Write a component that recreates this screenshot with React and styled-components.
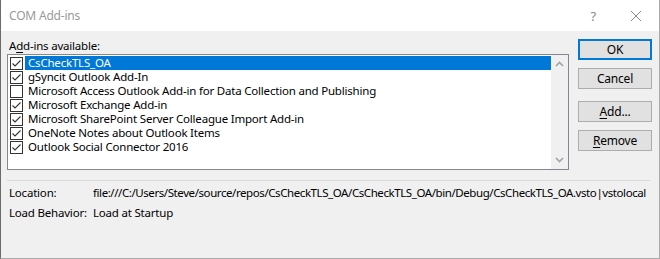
import styled, { createGlobalStyle } from 'styled-components'

const GlobalStyle = createGlobalStyle`
  html, body {
    margin: 0;
    padding: 0;
    background: #f0f0f0;
  }
  body {
    font-family: "Noto Sans", "Open Sans", sans-serif;
    font-size: 11.5px;
    letter-spacing: -0.2px;
    color: #000;
  }
`

const addIns = [
  { name: 'CsCheckTLS_OA', checked: true, selected: true },
  { name: 'gSyncit Outlook Add-In', checked: true },
  { name: 'Microsoft Access Outlook Add-in for Data Collection and Publishing', checked: false },
  { name: 'Microsoft Exchange Add-in', checked: true },
  { name: 'Microsoft SharePoint Server Colleague Import Add-in', checked: true },
  { name: 'OneNote Notes about Outlook Items', checked: true },
  { name: 'Outlook Social Connector 2016', checked: true },
]

const CheckBox = ({ checked }) => (
  <Box>
    {checked && (
      <svg width="11" height="11" viewBox="0 0 11 11">
        <path d="M1.5 5.5 L4 8 L9.5 2.5" fill="none" stroke="#333" strokeWidth="1.1" />
      </svg>
    )}
  </Box>
)

const Chevron = ({ down }) => (
  <svg width="9" height="6" viewBox="0 0 9 6">
    <path
      d={down ? 'M1 1 L4.5 4.5 L8 1' : 'M1 5 L4.5 1.5 L8 5'}
      fill="none"
      stroke="#a3a3a3"
      strokeWidth="1.6"
    />
  </svg>
)

const App = () => {
  return (
    <>
      <GlobalStyle />
      <Window>
        <TitleBar>
          <Title>COM Add-ins</Title>
          <TitleButtons>
            <HelpGlyph>?</HelpGlyph>
            <svg width="12" height="12" viewBox="0 0 12 12">
              <path d="M1 1 L11 11 M11 1 L1 11" stroke="#8a8a8a" strokeWidth="1" />
            </svg>
          </TitleButtons>
        </TitleBar>

        <Body>
          <Main>
            <ListColumn>
              <Label>A<u>d</u>d-ins available:</Label>
              <ListBox>
                <Items>
                  {addIns.map((item) => (
                    <Row key={item.name}>
                      <CheckBox checked={item.checked} />
                      <ItemText $selected={item.selected}>{item.name}</ItemText>
                    </Row>
                  ))}
                </Items>
                <ScrollBar>
                  <Chevron />
                  <Chevron down />
                </ScrollBar>
              </ListBox>
            </ListColumn>

            <Buttons>
              <Button $default>OK</Button>
              <Button>Cancel</Button>
              <Spacer />
              <Button><u>A</u>dd...</Button>
              <Button><u>R</u>emove</Button>
            </Buttons>
          </Main>

          <Separator />

          <Details>
            <DetailLabel>Location:</DetailLabel>
            <DetailValue $tight>file:///C:/Users/Steve/source/repos/CsCheckTLS_OA/CsCheckTLS_OA/bin/Debug/CsCheckTLS_OA.vsto|vstolocal</DetailValue>
            <DetailLabel>Load Behavior:</DetailLabel>
            <DetailValue>Load at Startup</DetailValue>
          </Details>
        </Body>
      </Window>
    </>
  )
}

const Window = styled.div`
  width: 660px;
  height: 259px;
  box-sizing: border-box;
  border-left: 1px solid #6b6b6b;
  border-right: 1px solid #aaaaaa;
  border-bottom: 1px solid #aaaaaa;
  background: #f0f0f0;
  display: flex;
  flex-direction: column;
  overflow: hidden;
`

const TitleBar = styled.div`
  height: 31px;
  flex: none;
  background: #fff;
  display: flex;
  align-items: center;
  justify-content: space-between;
  padding: 0 17px 0 8px;
`

const Title = styled.div`
  color: #9a9a9a;
  font-size: 12px;
  margin-top: -1px;
`

const TitleButtons = styled.div`
  display: flex;
  align-items: center;
  gap: 34px;
`

const HelpGlyph = styled.span`
  color: #8a8a8a;
  font-size: 13px;
`

const Body = styled.div`
  flex: 1;
  display: flex;
  flex-direction: column;
  padding: 7px 7px 0 6px;
`

const Main = styled.div`
  display: flex;
  gap: 9px;
`

const ListColumn = styled.div`
  display: flex;
  flex-direction: column;
  width: 562px;
`

const Label = styled.div`
  height: 16px;
  line-height: 15px;
  padding-left: 2px;

  u {
    text-decoration-thickness: 1px;
    text-underline-offset: 2px;
  }
`

const ListBox = styled.div`
  height: 116px;
  box-sizing: border-box;
  border: 1px solid #828790;
  background: #fff;
  display: flex;
`

const Items = styled.div`
  flex: 1;
  padding-top: 1px;
  display: flex;
  flex-direction: column;
`

const Row = styled.div`
  height: 14px;
  display: flex;
  align-items: center;
  padding-left: 2px;
`

const Box = styled.div`
  width: 13px;
  height: 13px;
  box-sizing: border-box;
  border: 1px solid #333;
  background: #fff;
  flex: none;
  display: flex;
  align-items: center;
  justify-content: center;
`

const ItemText = styled.div`
  flex: 1;
  height: 14px;
  line-height: 14px;
  margin-left: 2px;
  padding-left: 3px;
  white-space: nowrap;
  background: ${(p) => (p.$selected ? '#0078d7' : 'transparent')};
  color: ${(p) => (p.$selected ? '#fff' : '#000')};
`

const ScrollBar = styled.div`
  width: 17px;
  flex: none;
  background: #f0f0f0;
  display: flex;
  flex-direction: column;
  align-items: center;
  justify-content: space-between;
  padding: 6px 0 6px;
`

const Buttons = styled.div`
  display: flex;
  flex-direction: column;
  gap: 8px;
  padding-top: 1px;
`

const Spacer = styled.div`
  height: 4px;
  margin-top: -8px;
`

const Button = styled.div`
  width: 74px;
  height: 21px;
  box-sizing: border-box;
  background: #e1e1e1;
  border: ${(p) => (p.$default ? '2px solid #0078d7' : '1px solid #adadad')};
  display: flex;
  align-items: center;
  justify-content: center;
  font-size: 12px;

  u {
    text-decoration-thickness: 1px;
    text-underline-offset: 2px;
  }
`

const Separator = styled.div`
  height: 1px;
  background: #dadada;
  margin: 10px 2px 0 0;
`

const Details = styled.div`
  display: grid;
  grid-template-columns: 84px 1fr;
  row-gap: 5px;
  padding: 4px 0 0 2px;
  line-height: 15px;
  white-space: nowrap;
`

const DetailLabel = styled.div``

const DetailValue = styled.div`
  letter-spacing: ${(p) => (p.$tight ? '-0.42px' : '-0.2px')};
`

export default App
